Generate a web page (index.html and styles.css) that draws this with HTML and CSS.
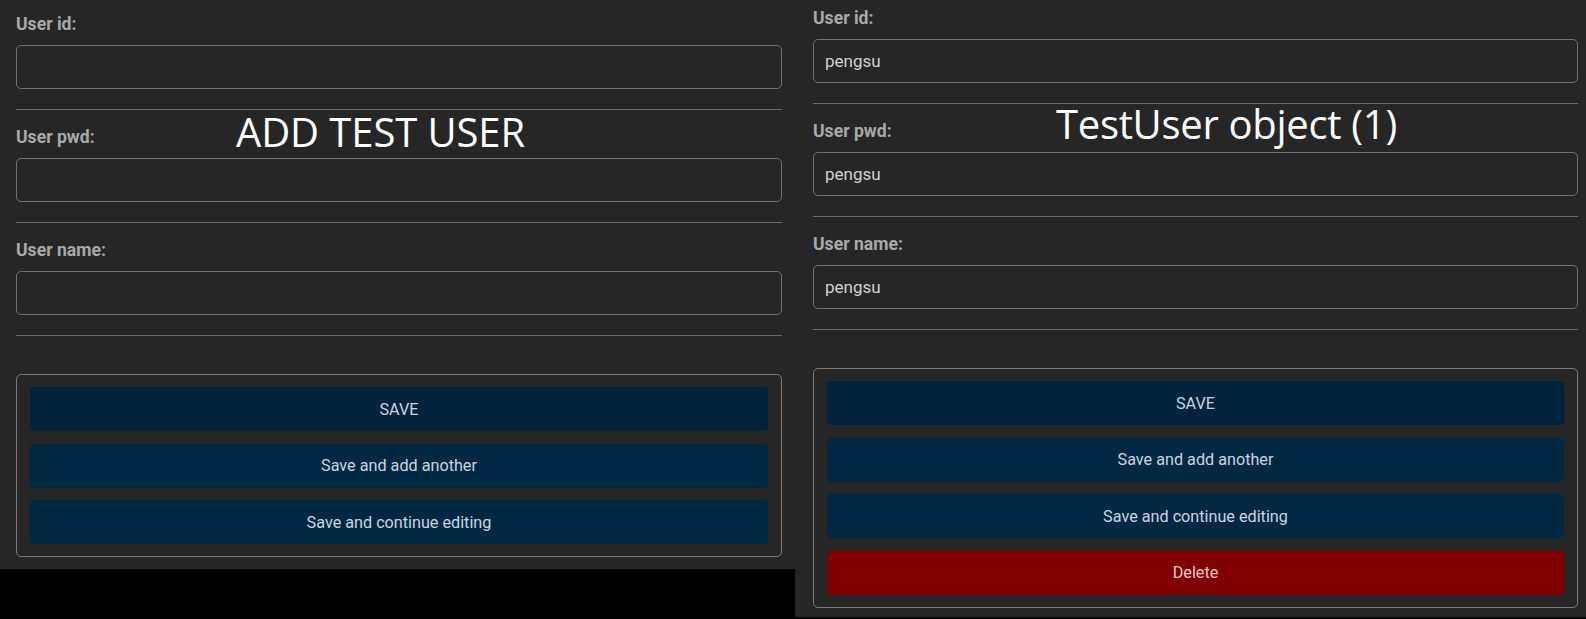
FILE: index.html
```html
<!DOCTYPE html>
<html lang="en">
<head>
<meta charset="utf-8">
<title>Test user admin</title>
<link rel="stylesheet" href="styles.css">
</head>
<body>
<div class="screens">
  <section class="panel panel-add">
    <div class="field">
      <label class="field-label">User id:</label>
      <div class="input"></div>
    </div>
    <div class="field">
      <label class="field-label">User pwd:</label>
      <div class="input"></div>
    </div>
    <div class="field">
      <label class="field-label">User name:</label>
      <div class="input"></div>
    </div>
    <div class="actions">
      <button class="btn btn-save">SAVE</button>
      <button class="btn btn-alt">Save and add another</button>
      <button class="btn btn-alt">Save and continue editing</button>
    </div>
    <div class="caption caption-add">ADD TEST USER</div>
  </section>
  <section class="panel panel-edit">
    <div class="field">
      <label class="field-label">User id:</label>
      <div class="input">pengsu</div>
    </div>
    <div class="field">
      <label class="field-label">User pwd:</label>
      <div class="input">pengsu</div>
    </div>
    <div class="field">
      <label class="field-label">User name:</label>
      <div class="input">pengsu</div>
    </div>
    <div class="actions">
      <button class="btn btn-save">SAVE</button>
      <button class="btn btn-alt">Save and add another</button>
      <button class="btn btn-alt">Save and continue editing</button>
      <button class="btn btn-delete">Delete</button>
    </div>
    <div class="caption caption-edit">TestUser object (1)</div>
  </section>
</div>
</body>
</html>
```
FILE: styles.css
```css
html, body {
  margin: 0;
  padding: 0;
  background: #000;
}
body {
  font-family: Roboto, "Liberation Sans", sans-serif;
  width: 1586px;
  height: 619px;
  overflow: hidden;
}
.screens {
  display: flex;
  align-items: flex-start;
}
.panel {
  position: relative;
  background: #262626;
  box-sizing: border-box;
}
.panel-add {
  width: 795px;
  height: 569px;
  padding: 0 13px 0 16px;
}
.panel-edit {
  width: 791px;
  height: 617px;
  padding: 0 8px 0 18px;
}
.field {
  padding: 16px 0 20px;
  border-bottom: 1px solid #6b6b6b;
}
.panel-add .field:first-child { padding-top: 13px; }
.panel-edit .field:first-child { padding-top: 7px; }
.field-label {
  display: block;
  font-size: 17.6px;
  font-weight: 700;
  line-height: 22px;
  color: #a9a9a9;
  margin-bottom: 10px;
}
.input {
  height: 44px;
  box-sizing: border-box;
  border: 1px solid #717171;
  border-radius: 5px;
  padding: 0 11px;
  font-size: 17px;
  line-height: 42px;
  color: #d2d2d2;
}
.actions {
  margin-top: 38px;
  border: 1px solid #7a7a7a;
  border-radius: 5px;
  padding: 12px 13px 12px 13px;
  display: flex;
  flex-direction: column;
  gap: 12.5px;
}
.btn {
  display: block;
  width: 100%;
  height: 44px;
  border: none;
  border-radius: 4px;
  font-family: Roboto, "Liberation Sans", sans-serif;
  font-size: 16.2px;
  color: #c9d5e1;
  padding: 0;
}
.btn-save { background: #00233c; }
.btn-alt { background: #002842; }
.btn-delete { background: #800000; color: #f3c6c6; }
.caption {
  position: absolute;
  font-family: "Open Sans", "Noto Sans", sans-serif;
  font-size: 40px;
  line-height: 40px;
  color: #fff;
  white-space: nowrap;
}
.caption-add {
  left: 236px;
  top: 112px;
  letter-spacing: -0.1px;
}
.caption-edit {
  left: 261px;
  top: 104px;
  letter-spacing: -0.3px;
}
```
